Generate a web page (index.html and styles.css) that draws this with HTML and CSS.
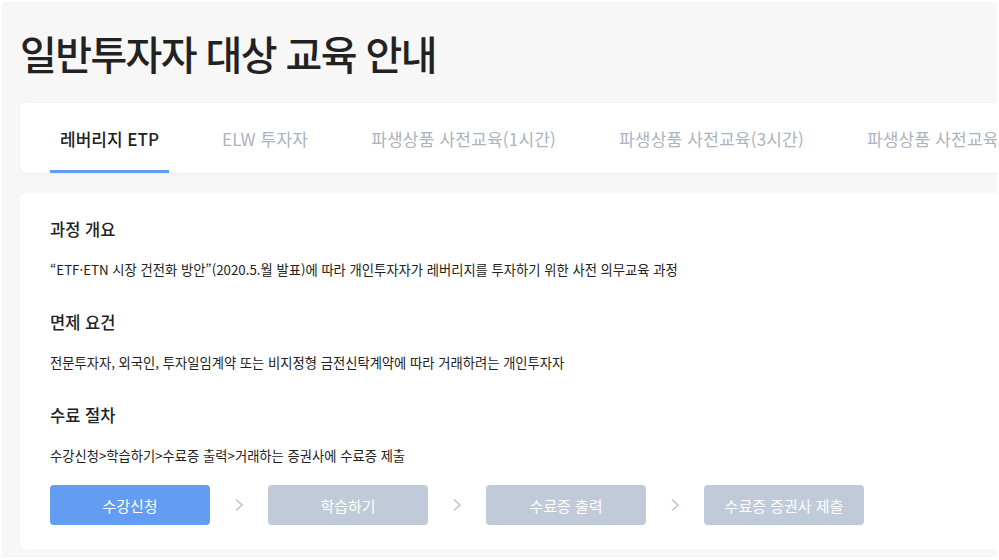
FILE: index.html
```html
<!DOCTYPE html>
<html lang="ko">
<head>
<meta charset="utf-8">
<link rel="stylesheet" href="styles.css">
</head>
<body>
<div class="page">
  <h1 class="title">일반투자자 대상 교육 안내</h1>
  <nav class="tabs">
    <a class="tab active">레버리지 ETP</a>
    <a class="tab">ELW 투자자</a>
    <a class="tab">파생상품 사전교육(1시간)</a>
    <a class="tab">파생상품 사전교육(3시간)</a>
    <a class="tab">파생상품 사전교육(추가)</a>
  </nav>
  <section class="card">
    <h2 class="heading">과정 개요</h2>
    <p class="desc">“ETF·ETN 시장 건전화 방안”(2020.5.월 발표)에 따라 개인투자자가 레버리지를 투자하기 위한 사전 의무교육 과정</p>
    <h2 class="heading">면제 요건</h2>
    <p class="desc">전문투자자, 외국인, 투자일임계약 또는 비지정형 금전신탁계약에 따라 거래하려는 개인투자자</p>
    <h2 class="heading">수료 절차</h2>
    <p class="desc">수강신청&gt;학습하기&gt;수료증 출력&gt;거래하는 증권사에 수료증 제출</p>
    <div class="steps">
      <span class="step current">수강신청</span>
      <svg class="chev" width="10" height="14" viewBox="0 0 10 14"><path d="M2 1.5 L8 7 L2 12.5" fill="none" stroke="#b9c3d1" stroke-width="1.5"/></svg>
      <span class="step">학습하기</span>
      <svg class="chev" width="10" height="14" viewBox="0 0 10 14"><path d="M2 1.5 L8 7 L2 12.5" fill="none" stroke="#b9c3d1" stroke-width="1.5"/></svg>
      <span class="step">수료증 출력</span>
      <svg class="chev" width="10" height="14" viewBox="0 0 10 14"><path d="M2 1.5 L8 7 L2 12.5" fill="none" stroke="#b9c3d1" stroke-width="1.5"/></svg>
      <span class="step">수료증 증권사 제출</span>
    </div>
  </section>
</div>
</body>
</html>
```
FILE: styles.css
```css
* { box-sizing: border-box; }
html, body { margin: 0; padding: 0; background: #fff; }
body {
  font-family: "Noto Sans CJK KR", "Noto Sans", sans-serif;
  color: #222;
}
.page {
  margin: 2px;
  width: 995px;
  height: 555px;
  background: #f7f7f7;
  overflow: hidden;
  padding: 0 0 0 18px;
}
.title {
  margin: 0;
  padding: 26px 0 0 0;
  font-size: 40px;
  font-weight: 500;
  line-height: 50px;
  letter-spacing: -1.6px;
  color: #222;
  height: 101px;
}
.tabs {
  display: flex;
  width: 1100px;
  height: 70px;
  background: #fff;
  border-radius: 6px;
  box-shadow: 0 1px 3px rgba(0,0,0,0.05);
  padding-left: 30px;
  white-space: nowrap;
  overflow: hidden;
}
.tab {
  display: flex;
  align-items: center;
  padding: 0 10px;
  margin-right: 43px;
  font-size: 17px;
  letter-spacing: 0.2px;
  color: #aab3c0;
  border-bottom: 3px solid transparent;
  padding-top: 3px;
  flex-shrink: 0;
}
.tab.active {
  color: #222;
  font-weight: 500;
  letter-spacing: 0;
  border-bottom-color: #629cf2;
}
.card {
  margin-top: 20px;
  width: 1100px;
  height: 356px;
  background: #fff;
  border-radius: 6px;
  padding: 23px 30px 0 30px;
}
.heading {
  margin: 0;
  font-size: 16.5px;
  font-weight: 500;
  line-height: 26px;
  color: #222;
}
.desc {
  margin: 18px 0 29px 0;
  font-size: 13.3px;
  line-height: 20px;
  color: #222;
}
.desc + .heading + .desc + .heading { margin-top: 1px; }
.steps {
  display: flex;
  align-items: center;
  margin-top: -10px;
}
.step {
  width: 160px;
  height: 40px;
  border-radius: 4px;
  background: #c0cad8;
  color: #fff;
  font-size: 15px;
  display: flex;
  align-items: center;
  justify-content: center;
}
.step.current { background: #639df2; }
.chev { margin: 0 24px; }
```
